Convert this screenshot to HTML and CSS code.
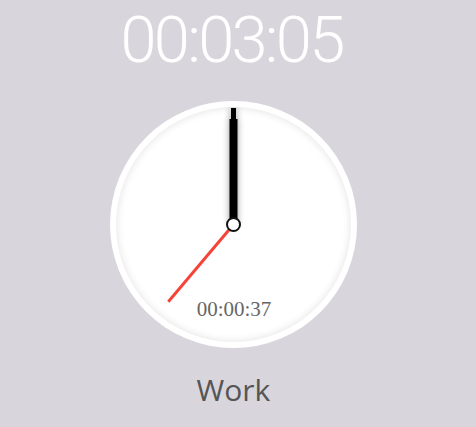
FILE: index.html
```html
<!DOCTYPE html>
<html lang="en">
<head>
    <meta charset="UTF-8">
    <meta name="viewport" content="width=device-width, initial-scale=1.0">
    <title>Timer</title>
    <link rel="stylesheet" href="styles.css">
</head>
<body>
    <div class="app">
        <div class="timer">00:03:05</div>
        <div class="clock">
            <div class="face">
                <svg class="hands" viewBox="0 0 235 235" width="235" height="235">
                    <defs>
                        <filter id="glow" x="-200%" y="-20%" width="500%" height="140%">
                            <feGaussianBlur in="SourceAlpha" stdDeviation="3.5"/>
                            <feComponentTransfer><feFuncA type="linear" slope="0.4"/></feComponentTransfer>
                            <feMerge><feMergeNode/><feMergeNode in="SourceGraphic"/></feMerge>
                        </filter>
                    </defs>
                    <g filter="url(#glow)">
                        <rect x="115" y="1" width="5" height="12" fill="#000"/>
                        <rect x="113.5" y="12" width="8" height="106" fill="#000"/>
                    </g>
                    <line x1="117.5" y1="117.5" x2="52.3" y2="194.7" stroke="#f5433a" stroke-width="3"/>
                    <circle cx="117.5" cy="117.5" r="6.5" fill="#fff" stroke="#111" stroke-width="2"/>
                    <text class="lap" x="118" y="209" text-anchor="middle">00:00:37</text>
                </svg>
            </div>
        </div>
        <div class="label">Work</div>
    </div>
</body>
</html>
```

FILE: styles.css
```css
body {
    margin: 0;
    background-color: #d8d5dd;
    font-family: "Open Sans", Arial, sans-serif;
}
.app {
    display: flex;
    flex-direction: column;
    align-items: center;
    height: 427px;
    padding-right: 9px;
}
.timer {
    color: #fff;
    font-family: Roboto, "Open Sans", sans-serif;
    font-size: 65px;
    font-weight: 300;
    line-height: normal;
    letter-spacing: -2.7px;
    padding: 2px 5px 0 1px;
    height: 99px;
}
.clock {
    width: 235px;
    height: 235px;
    padding: 6px;
    background: #fff;
    border-radius: 50%;
}
.face {
    width: 235px;
    height: 235px;
    border-radius: 50%;
    box-shadow: inset 0 0 8px rgba(0, 0, 0, 0.12);
}
.hands {
    display: block;
}
.lap {
    font-family: "Liberation Serif", "Times New Roman", serif;
    font-size: 21px;
    fill: #666;
}
.label {
    margin-top: 24px;
    font-size: 30px;
    color: #555;
    line-height: 1.2;
}
```
